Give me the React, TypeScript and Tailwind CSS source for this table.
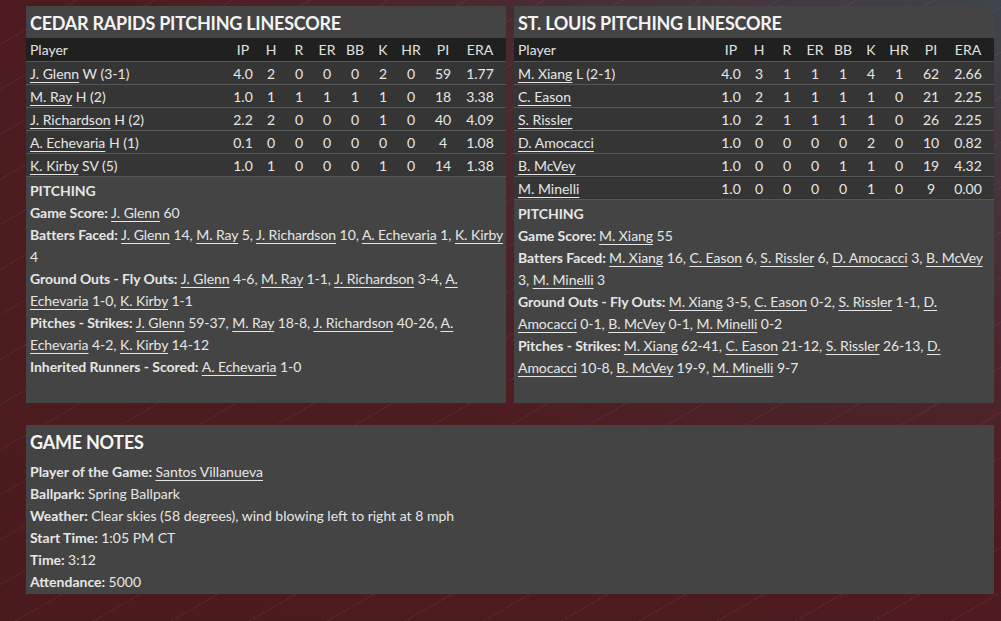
import React from "react";

type Seg = { t: string; link?: boolean };
type Line = { label?: string; segs: Seg[] };

const cols = ["IP", "H", "R", "ER", "BB", "K", "HR", "PI", "ERA"];
const grid =
  "grid grid-cols-[1fr_28px_28px_28px_28px_28px_28px_28px_36px_38px] pr-[7px] pl-[4px] items-center";

type Row = { name: string; note?: string; v: string[] };

const left: Row[] = [
  { name: "J. Glenn", note: "W (3-1)", v: ["4.0", "2", "0", "0", "0", "2", "0", "59", "1.77"] },
  { name: "M. Ray", note: "H (2)", v: ["1.0", "1", "1", "1", "1", "1", "0", "18", "3.38"] },
  { name: "J. Richardson", note: "H (2)", v: ["2.2", "2", "0", "0", "0", "1", "0", "40", "4.09"] },
  { name: "A. Echevaria", note: "H (1)", v: ["0.1", "0", "0", "0", "0", "0", "0", "4", "1.08"] },
  { name: "K. Kirby", note: "SV (5)", v: ["1.0", "1", "0", "0", "0", "1", "0", "14", "1.38"] },
];

const right: Row[] = [
  { name: "M. Xiang", note: "L (2-1)", v: ["4.0", "3", "1", "1", "1", "4", "1", "62", "2.66"] },
  { name: "C. Eason", v: ["1.0", "2", "1", "1", "1", "1", "0", "21", "2.25"] },
  { name: "S. Rissler", v: ["1.0", "2", "1", "1", "1", "1", "0", "26", "2.25"] },
  { name: "D. Amocacci", v: ["1.0", "0", "0", "0", "0", "2", "0", "10", "0.82"] },
  { name: "B. McVey", v: ["1.0", "0", "0", "0", "1", "1", "0", "19", "4.32"] },
  { name: "M. Minelli", v: ["1.0", "0", "0", "0", "0", "1", "0", "9", "0.00"] },
];

const L = (t: string): Seg => ({ t, link: true });
const T = (t: string): Seg => ({ t });

const leftNotes: Line[] = [
  { label: "Game Score:", segs: [L("J. Glenn"), T(" 60")] },
  {
    label: "Batters Faced:",
    segs: [L("J. Glenn"), T(" 14, "), L("M. Ray"), T(" 5, "), L("J. Richardson"), T(" 10, "), L("A. Echevaria"), T(" 1, "), L("K. Kirby"), T(" 4")],
  },
  {
    label: "Ground Outs - Fly Outs:",
    segs: [L("J. Glenn"), T(" 4-6, "), L("M. Ray"), T(" 1-1, "), L("J. Richardson"), T(" 3-4, "), L("A. Echevaria"), T(" 1-0, "), L("K. Kirby"), T(" 1-1")],
  },
  {
    label: "Pitches - Strikes:",
    segs: [L("J. Glenn"), T(" 59-37, "), L("M. Ray"), T(" 18-8, "), L("J. Richardson"), T(" 40-26, "), L("A. Echevaria"), T(" 4-2, "), L("K. Kirby"), T(" 14-12")],
  },
  { label: "Inherited Runners - Scored:", segs: [L("A. Echevaria"), T(" 1-0")] },
];

const rightNotes: Line[] = [
  { label: "Game Score:", segs: [L("M. Xiang"), T(" 55")] },
  {
    label: "Batters Faced:",
    segs: [L("M. Xiang"), T(" 16, "), L("C. Eason"), T(" 6, "), L("S. Rissler"), T(" 6, "), L("D. Amocacci"), T(" 3, "), L("B. McVey"), T(" 3, "), L("M. Minelli"), T(" 3")],
  },
  {
    label: "Ground Outs - Fly Outs:",
    segs: [L("M. Xiang"), T(" 3-5, "), L("C. Eason"), T(" 0-2, "), L("S. Rissler"), T(" 1-1, "), L("D. Amocacci"), T(" 0-1, "), L("B. McVey"), T(" 0-1, "), L("M. Minelli"), T(" 0-2")],
  },
  {
    label: "Pitches - Strikes:",
    segs: [L("M. Xiang"), T(" 62-41, "), L("C. Eason"), T(" 21-12, "), L("S. Rissler"), T(" 26-13, "), L("D. Amocacci"), T(" 10-8, "), L("B. McVey"), T(" 19-9, "), L("M. Minelli"), T(" 9-7")],
  },
];

const gameNotes: Line[] = [
  { label: "Player of the Game:", segs: [L("Santos Villanueva")] },
  { label: "Ballpark:", segs: [T("Spring Ballpark")] },
  { label: "Weather:", segs: [T("Clear skies (58 degrees), wind blowing left to right at 8 mph")] },
  { label: "Start Time:", segs: [T("1:05 PM CT")] },
  { label: "Time:", segs: [T("3:12")] },
  { label: "Attendance:", segs: [T("5000")] },
];

function Segs({ segs }: { segs: Seg[] }) {
  return (
    <>
      {segs.map((s, i) =>
        s.link ? (
          <span key={i} className="underline underline-offset-[3px] decoration-1">
            {s.t}
          </span>
        ) : (
          <span key={i}>{s.t}</span>
        )
      )}
    </>
  );
}

function NoteLines({ lines }: { lines: Line[] }) {
  return (
    <>
      {lines.map((ln, i) => (
        <div key={i} className="leading-[22px]">
          {ln.label && <span className="font-bold">{ln.label} </span>}
          <Segs segs={ln.segs} />
        </div>
      ))}
    </>
  );
}

function Panel({ title, rows, notes }: { title: string; rows: Row[]; notes: Line[] }) {
  return (
    <div className="flex-1 bg-[#444444] flex flex-col">
      <div className="h-[32px] px-[4px] pt-[2px] flex items-center text-[18px] font-bold tracking-[-0.25px] text-[#f4f4f4]">
        {title}
      </div>
      <div className={`${grid} h-[23px] bg-[#202020] text-[#e2e2e2]`}>
        <div>Player</div>
        {cols.map((c) => (
          <div key={c} className="text-center">
            {c}
          </div>
        ))}
      </div>
      <div className="border-b border-[#565656]">
        {rows.map((r, i) => (
          <div key={i} className={`${grid} h-[23px] border-t border-[#565656] bg-[#353535] text-[#e6e6e6]`}>
            <div className="whitespace-nowrap">
              <span className="underline underline-offset-[3px] decoration-1">{r.name}</span>
              {r.note ? ` ${r.note}` : ""}
            </div>
            {r.v.map((x, j) => (
              <div key={j} className="text-center">
                {x}
              </div>
            ))}
          </div>
        ))}
      </div>
      <div className="pl-[4px] pr-0 pt-[3px] text-[#e6e6e6] tracking-[-0.05px]">
        <div className="leading-[22px] font-bold">PITCHING</div>
        <NoteLines lines={notes} />
      </div>
    </div>
  );
}

export default function App() {
  return (
    <div className="relative w-[1001px] h-[621px] overflow-hidden font-['Lato',sans-serif] text-[14px] bg-[radial-gradient(ellipse_at_top_right,#3f444d_0%,#4a2a31_35%,#4e1c20_60%,#4a1a1c_100%)]">
      <div className="absolute inset-0 opacity-[0.05] bg-[repeating-linear-gradient(150deg,transparent_0px,transparent_38px,#ffffff_38px,#ffffff_39px)]" />
      <div className="relative pl-[26px] pr-[7px] pt-[6px] flex flex-col gap-[22px]">
        <div className="flex gap-[8px] h-[397px]">
          <Panel title="CEDAR RAPIDS PITCHING LINESCORE" rows={left} notes={leftNotes} />
          <Panel title="ST. LOUIS PITCHING LINESCORE" rows={right} notes={rightNotes} />
        </div>
        <div className="bg-[#444444] h-[169px] flex flex-col text-[#e6e6e6]">
          <div className="h-[32px] px-[4px] pt-[2px] flex items-center text-[18px] font-bold tracking-[-0.25px] text-[#f4f4f4]">
            GAME NOTES
          </div>
          <div className="px-[4px] pt-[4px]">
            <NoteLines lines={gameNotes} />
          </div>
        </div>
      </div>
    </div>
  );
}
